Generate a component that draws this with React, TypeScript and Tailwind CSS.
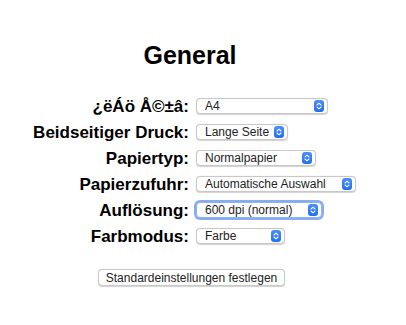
import React from 'react';

const rows = [
  { label: '¿ëÁö Å©±â:', value: 'A4', width: 'w-[132px]' },
  { label: 'Beidseitiger Druck:', value: 'Lange Seite', width: 'w-[92px]' },
  { label: 'Papiertyp:', value: 'Normalpapier', width: 'w-[120px]' },
  { label: 'Papierzufuhr:', value: 'Automatische Auswahl', width: 'w-[160px]' },
  { label: 'Auflösung:', value: '600 dpi (normal)', width: 'w-[126px]', focused: true },
  { label: 'Farbmodus:', value: 'Farbe', width: 'w-[89px]' },
];

function Stepper() {
  return (
    <span className="flex h-[12px] w-[10px] items-center justify-center rounded-[3px] bg-gradient-to-b from-[#4a90f8] to-[#1f6ff0]">
      <svg width="6" height="8" viewBox="0 0 6 8" fill="none">
        <path d="M1 3 L3 1.2 L5 3" stroke="white" strokeWidth="1.1" strokeLinecap="round" strokeLinejoin="round" />
        <path d="M1 5 L3 6.8 L5 5" stroke="white" strokeWidth="1.1" strokeLinecap="round" strokeLinejoin="round" />
      </svg>
    </span>
  );
}

function Select({ value, width, focused }: { value: string; width: string; focused?: boolean }) {
  return (
    <div
      className={`${width} flex h-[16px] items-center justify-between rounded-[4px] bg-white pl-[8px] pr-[3px] text-[12px] leading-none text-[#222] ${
        focused
          ? 'ring-2 ring-[#86aeee] border border-[#8db2ee]'
          : 'border-[0.5px] border-[#c8c8c8] shadow-[0_0.5px_1px_rgba(0,0,0,0.18)]'
      }`}
    >
      <span>{value}</span>
      <Stepper />
    </div>
  );
}

export default function App() {
  return (
    <div className="h-[325px] w-[406px] bg-white font-['Liberation_Sans',Arial,sans-serif] text-black">
      <div className="flex flex-col pt-[40px]">
        <h1 className="w-[380px] text-center text-[25px] font-bold leading-[30px]">General</h1>

        <div className="mt-[23px] flex flex-col">
          {rows.map((r) => (
            <div key={r.label} className="flex h-[26px] items-center">
              <div className="w-[189px] text-right text-[17px] font-bold leading-none">{r.label}</div>
              <div className="ml-[7px]">
                <Select value={r.value} width={r.width} focused={r.focused} />
              </div>
            </div>
          ))}
        </div>

        <div className="mt-[20px] flex w-[383px] justify-center">
          <button className="h-[17px] rounded-[4px] border-[0.5px] border-[#c8c8c8] bg-white px-[7px] text-[12px] leading-none text-[#222] shadow-[0_0.5px_1px_rgba(0,0,0,0.18)]">
            Standardeinstellungen festlegen
          </button>
        </div>
      </div>
    </div>
  );
}
